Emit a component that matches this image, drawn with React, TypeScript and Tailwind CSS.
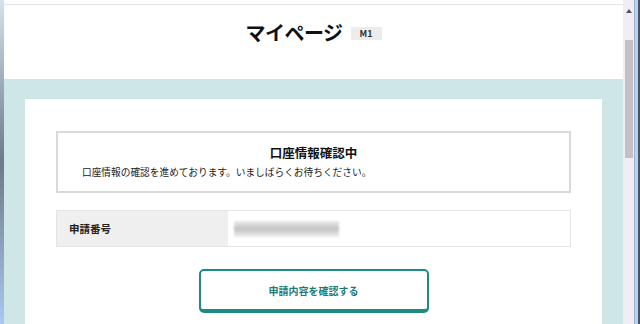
import React from "react";

export default function App() {
  const jp = { fontFamily: '"Noto Sans CJK JP", "Noto Sans", sans-serif' };
  return (
    <div className="flex h-[324px] w-[640px] overflow-hidden bg-white" style={jp}>
      {/* left window edge */}
      <div className="w-[4px] shrink-0 bg-gradient-to-b from-[#d6e2ee] via-[#6e7a88] to-[#a9c8f0]" />
      {/* page */}
      <div className="flex min-w-0 flex-1 flex-col">
        <div className="h-[5px] shrink-0 border-b border-[#e2e6e6] bg-white" />
        <header className="flex h-[74px] shrink-0 items-start justify-center bg-white pt-[15px]">
          <div className="flex items-center gap-[8px]">
            <h1 className="text-[20px] font-bold leading-[26px] tracking-[-0.5px] text-[#111]">マイページ</h1>
            <span className="flex h-[13px] w-[31px] items-center justify-center bg-[#ececec] text-[9px] font-bold leading-none text-[#333]">
              M1
            </span>
          </div>
        </header>
        <main className="flex-1 bg-[#cfe6e6] px-[21px] pt-[20px]">
          <div className="h-full bg-white px-[31px] pt-[32px]">
            <div className="flex h-[62px] flex-col border-2 border-[#d9d9d9] px-[24px] pt-[11px]">
              <p className="text-center text-[12.5px] font-bold leading-[18px] text-[#111]">口座情報確認中</p>
              <p className="mt-[2px] text-[9.7px] leading-[16px] text-[#222]">
                口座情報の確認を進めております。いましばらくお待ちください。
              </p>
            </div>
            <div className="mt-[17px] flex h-[37px] border border-[#e4e4e4]">
              <div className="flex w-[171px] items-center bg-[#efefef] pl-[12px] text-[10.5px] font-bold text-[#222]">
                申請番号
              </div>
              <div className="relative flex flex-1 items-center pl-[6px]">
                <div className="h-[16px] w-[105px] bg-gradient-to-b from-[#ececec] via-[#c4c4c4] to-[#f0f0f0] blur-[1px]" />
              </div>
            </div>
            <div className="mt-[22px] flex justify-center">
              <button className="flex h-[44px] w-[230px] items-center justify-center rounded-[5px] border-2 border-b-[4px] border-[#1e8a84] bg-white text-[10px] font-bold text-[#1e7a76]">
                申請内容を確認する
              </button>
            </div>
          </div>
        </main>
      </div>
      {/* scrollbar */}
      <div className="flex w-[11px] shrink-0 flex-col items-center bg-[#f0eef2]">
        <div className="mt-[9px] h-0 w-0 border-x-[3px] border-b-[4px] border-x-transparent border-b-[#555]" />
        <div className="mt-[27px] h-[118px] w-[8px] bg-[#c2c0c2]" />
      </div>
      {/* right window edge */}
      <div className="flex w-[6px] shrink-0">
        <div className="w-[1px] bg-[#9db3d6]" />
        <div className="w-[3px] bg-[#b6d2f2]" />
        <div className="w-[2px] bg-[#4b5361]" />
      </div>
    </div>
  );
}
